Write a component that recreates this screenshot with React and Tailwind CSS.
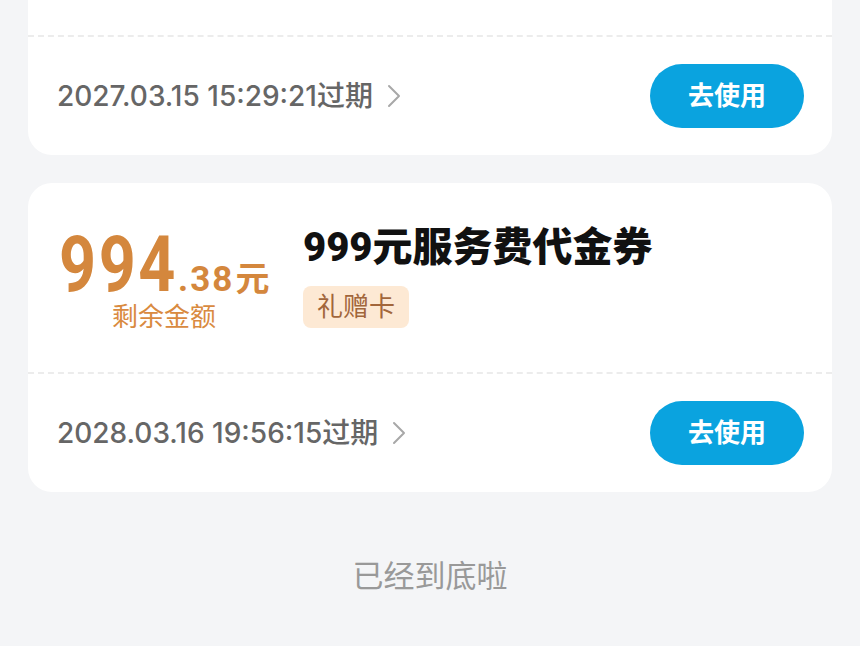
import React from "react";

const cjk = { fontFamily: 'Roboto, "Noto Sans CJK SC", sans-serif' };
const dateFont = { fontFamily: 'Inter, "Noto Sans CJK SC", sans-serif' };
const num = { fontFamily: 'Roboto, sans-serif' };

const coupons = [
  { id: 1, left: "998", cents: ".00", title: "999元服务费代金券", expire: "2027.03.15 15:29:21过期" },
  { id: 2, left: "994", cents: ".38", title: "999元服务费代金券", expire: "2028.03.16 19:56:15过期" },
];

const Chevron = () => (
  <svg width="14" height="24" viewBox="0 0 14 24" fill="none" className="ml-[14px]">
    <polyline points="2,2 12,12 2,22" stroke="#a8a8a8" strokeWidth="2" strokeLinecap="round" strokeLinejoin="round" />
  </svg>
);

const CouponCard = ({ c, first }) => (
  <div className={`bg-white rounded-[24px] overflow-hidden ${first ? "-mt-[154px]" : ""}`}>
    {/* top: amount + title */}
    <div className="h-[189px] flex items-start pl-[30px]">
      <div className="w-[212px] flex flex-col items-center pt-[44px]">
        <div className="flex items-baseline text-[#d4873d] font-bold leading-none whitespace-nowrap">
          <span
            className="inline-block text-[77px] tracking-[3px] scale-x-[0.84] origin-left mr-[-22px]"
            style={num}
          >
            {c.left}
          </span>
          <span className="text-[35px] tracking-[2px]" style={num}>
            {c.cents}
          </span>
          <span className="text-[34px] ml-[1px]" style={cjk}>元</span>
        </div>
        <div className="text-[26px] leading-[26px] text-[#d98a40]" style={cjk}>
          剩余金额
        </div>
      </div>
      <div className="ml-[33px] pt-[45px] flex flex-col items-start">
        <div className="text-[40px] leading-[40px] font-black text-[#111]" style={cjk}>
          {c.title}
        </div>
        <div
          className="mt-[18px] h-[42px] px-[14px] flex items-center rounded-[8px] bg-[#fde9d4] text-[26px] text-[#a2663b]"
          style={cjk}
        >
          礼赠卡
        </div>
      </div>
    </div>

    {/* bottom: expire + button */}
    <div className="border-t-2 border-dashed border-[#ececec] h-[120px] flex items-center justify-between pl-[29px] pr-[28px]">
      <div className="flex items-center text-[28px] text-[#666] font-medium" style={dateFont}>
        {c.expire}
        <Chevron />
      </div>
      <button
        className="w-[154px] h-[64px] rounded-full bg-[#0aa3df] text-white text-[26px] font-bold"
        style={cjk}
      >
        去使用
      </button>
    </div>
  </div>
);

export default function App() {
  return (
    <div className="w-[860px] h-[646px] overflow-hidden bg-[#f4f5f7] px-[28px]">
      <div className="flex flex-col gap-[28px]">
        {coupons.map((c, i) => (
          <CouponCard key={c.id} c={c} first={i === 0} />
        ))}
      </div>
      <div className="mt-[62px] text-center text-[31px] text-[#999]" style={cjk}>
        已经到底啦
      </div>
    </div>
  );
}
